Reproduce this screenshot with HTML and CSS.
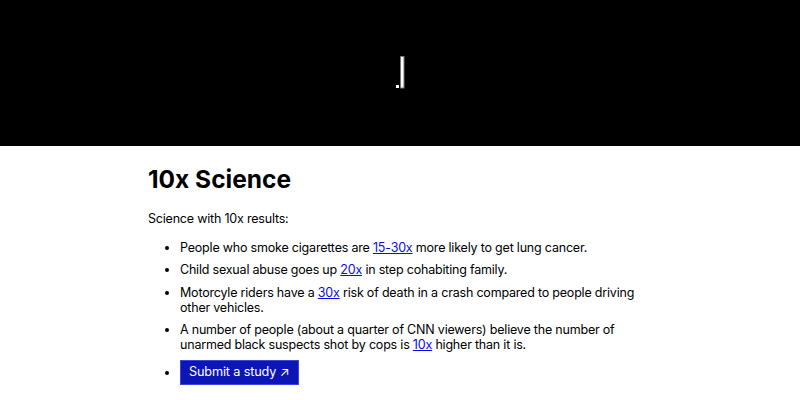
FILE: index.html
```html
<!DOCTYPE html>
<html>
<head>
<meta charset="utf-8">
<link rel="stylesheet" href="styles.css">
</head>
<body>
<header class="hero">
  <svg class="logo" width="10" height="34" viewBox="0 0 10 34" aria-label="logo">
    <rect x="0" y="29" width="3" height="3" fill="#fff"/>
    <rect x="4.5" y="0.5" width="3.5" height="31.5" fill="#fff" stroke="#777" stroke-width="1"/>
  </svg>
</header>
<main class="content">
  <h1 class="title">10x Science</h1>
  <p class="intro">Science with 10x results:</p>
  <ul class="list">
    <li>People who smoke cigarettes are <a href="#">15-30x</a> more likely to get lung cancer.</li>
    <li>Child sexual abuse goes up <a href="#">20x</a> in step cohabiting family.</li>
    <li>Motorcyle riders have a <a href="#">30x</a> risk of death in a crash compared to people driving other vehicles.</li>
    <li>A number of people (about a quarter of CNN viewers) believe the number of unarmed black suspects shot by cops is <a href="#">10x</a> higher than it is.</li>
    <li><a class="btn" href="#">Submit a study ↗</a></li>
  </ul>
</main>
</body>
</html>
```
FILE: styles.css
```css
html, body { margin: 0; padding: 0; background: #fff; }
body { font-family: Inter, "Noto Sans", sans-serif; color: #000; font-size: 12.5px; letter-spacing: -0.2px; }
.hero { height: 146px; background: #000; display: flex; justify-content: center; align-items: flex-start; padding-top: 56px; box-sizing: border-box; }
.logo { display: block; margin-left: 2px; }
.content { width: 504px; margin: 0 auto; }
.title { font-size: 24.5px; font-weight: 700; margin: 18px 0 0; line-height: 30px; letter-spacing: 0; }
.intro { margin: 17px 0 0; line-height: 16px; }
.list { margin: 12.5px 0 0; padding-left: 32px; line-height: 15px; }
.list li { margin-bottom: 7.5px; }
.list a { color: #0a0ae6; }
.list a.btn { display: inline-block; vertical-align: 1px; background: #0c15b5; color: #fff; text-decoration: none; padding: 3.5px 9px 3.5px 8px; line-height: 16px; border: 1px solid #3a48d8; font-size: 12.7px; letter-spacing: -0.15px; }
```
